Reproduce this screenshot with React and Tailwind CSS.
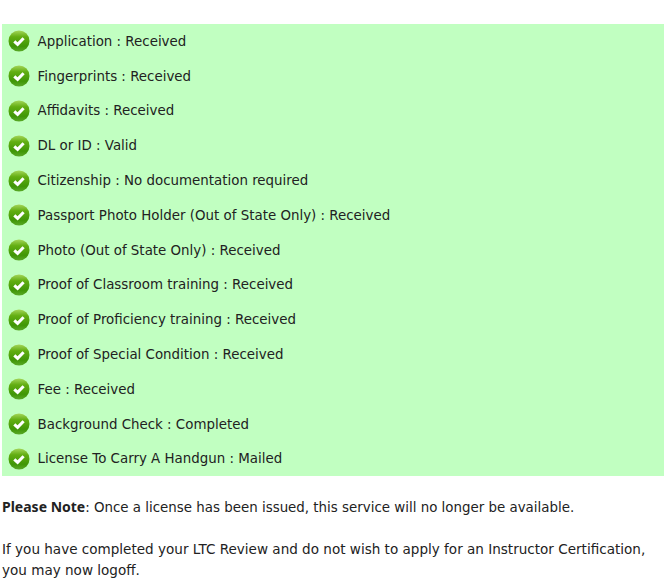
import React from "react";

const items = [
    "Application : Received",
    "Fingerprints : Received",
    "Affidavits : Received",
    "DL or ID : Valid",
    "Citizenship : No documentation required",
    "Passport Photo Holder (Out of State Only) : Received",
    "Photo (Out of State Only) : Received",
    "Proof of Classroom training : Received",
    "Proof of Proficiency training : Received",
    "Proof of Special Condition : Received",
    "Fee : Received",
    "Background Check : Completed",
    "License To Carry A Handgun : Mailed",
];

const CheckIcon = ({ id }) => (
    <svg width="22" height="22" viewBox="0 0 22 22" className="shrink-0">
        <defs>
            <linearGradient id={id} x1="0" y1="0" x2="0" y2="1">
                <stop offset="0" stopColor="#a5d65a" />
                <stop offset="0.3" stopColor="#62ae12" />
                <stop offset="0.75" stopColor="#3f9606" />
                <stop offset="1" stopColor="#5aa928" />
            </linearGradient>
        </defs>
        <circle cx="11" cy="11" r="10.5" fill={`url(#${id})`} />
        <path d="M6.3 11.3 L9.6 14.4 L15.6 8.2" fill="none" stroke="#fff" strokeWidth="3" />
    </svg>
);

const App = () => {
    return (
        <div className="w-[669px] h-[583px] overflow-hidden bg-white pt-6 pl-[2px] pr-[5px] font-['DejaVu_Sans',sans-serif] text-[13.4px] text-[#222]">
            <div className="bg-[#c1ffc1]">
                {items.map((item, i) => (
                    <div key={item} className="flex items-center gap-[7.5px] h-[34.8px] pl-[6px]">
                        <CheckIcon id={`check-${i}`} />
                        <span className="pt-[1px]">{item}</span>
                    </div>
                ))}
            </div>
            <p className="mt-[20px] leading-[21px]">
                <strong className="font-['Noto_Sans',sans-serif] text-[14px]">Please Note</strong>: Once a license has been issued, this service will no longer be available.
            </p>
            <p className="mt-[21px] leading-[21px] text-[13.55px]">
                If you have completed your LTC Review and do not wish to apply for an Instructor Certification, you may now logoff.
            </p>
        </div>
    );
};

export default App;
